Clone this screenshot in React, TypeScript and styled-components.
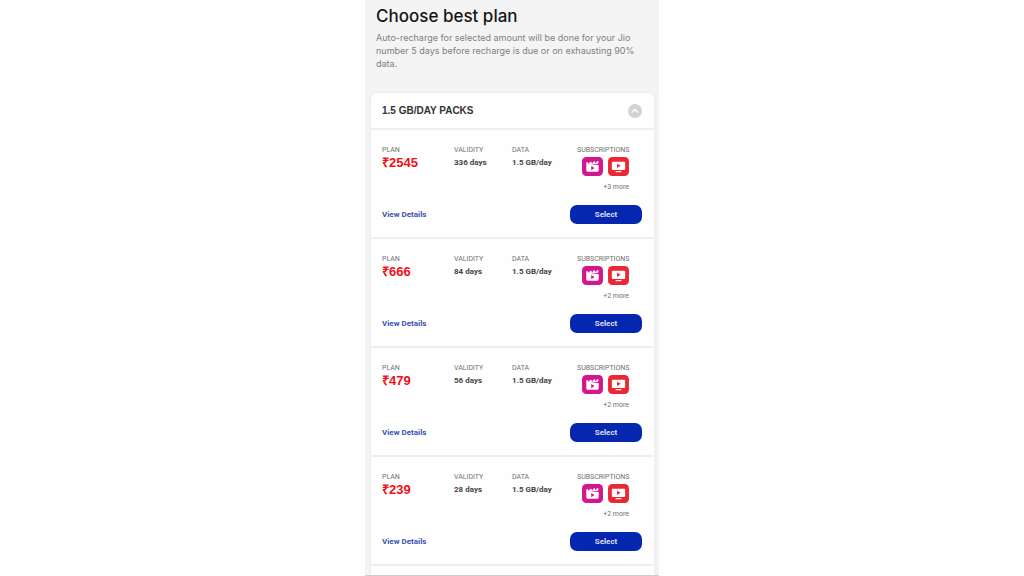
import React from "react";
import styled, { createGlobalStyle } from "styled-components";

const GlobalStyle = createGlobalStyle`
  * { box-sizing: border-box; }
  body {
    margin: 0;
    background: #fefefe;
    font-family: Roboto, "Liberation Sans", sans-serif;
  }
`;

const Screen = styled.main`
  display: flex;
  flex-direction: column;
  width: 100%;
  max-width: 294px;
  height: 100vh;
  margin: 0 auto;
  padding: 6px 5px 0 6px;
  overflow: hidden;
  background: #f4f4f4;
  border-bottom: 1px solid #cfcfcf;
`;

const Intro = styled.header`
  padding: 0 5px 23px;
  font-family: Inter, "Liberation Sans", sans-serif;
`;

const Title = styled.h1`
  margin: 0 0 5px;
  font-size: 17px;
  line-height: 20px;
  font-weight: 500;
  color: #161616;
`;

const Description = styled.p`
  margin: 0;
  font-size: 9px;
  line-height: 13px;
  font-weight: 400;
  color: #808080;
`;

const Card = styled.section`
  flex: 1;
  background: #fefefe;
  border-radius: 6px 6px 0 0;
  box-shadow: 0 0 4px rgba(0, 0, 0, 0.05);
`;

const CardHeader = styled.div`
  display: flex;
  align-items: center;
  justify-content: space-between;
  height: 37px;
  padding: 0 12px 0 11px;
  border-bottom: 2px solid #efefef;
`;

const CardTitle = styled.h2`
  margin: 0;
  font-family: "Liberation Sans", Arial, sans-serif;
  font-size: 10px;
  line-height: 13px;
  font-weight: 700;
  color: #333;
`;

const CollapseButton = styled.button`
  display: flex;
  padding: 0;
  border: 0;
  border-radius: 50%;
  background: #d3d3d3;
`;

const PlanRow = styled.article`
  height: 109px;
  padding: 15px 12px 0 11px;
  border-bottom: 2px solid #efefef;
`;

const Facts = styled.dl`
  display: grid;
  grid-template-columns: 72fr 58fr 65fr 65fr;
  height: 60px;
  margin: 0;
`;

const Fact = styled.div`
  min-width: 0;
`;

const Label = styled.dt`
  font-size: 7px;
  line-height: 10px;
  font-weight: 400;
  white-space: nowrap;
  color: #707070;
`;

const Value = styled.dd<{ $price?: boolean }>`
  margin: 0;
  font-family: ${(p) => (p.$price ? '"Liberation Sans", Arial, sans-serif' : "inherit")};
  font-size: ${(p) => (p.$price ? "13px" : "8px")};
  line-height: 16px;
  font-weight: 700;
  white-space: nowrap;
  color: ${(p) => (p.$price ? "#ec1018" : "#444")};
`;

const Subscriptions = styled.dd`
  width: 52px;
  margin: 2px 0 0;
`;

const Apps = styled.div`
  display: flex;
  justify-content: flex-end;
  gap: 5px;
`;

const More = styled.div`
  margin-top: 7px;
  font-size: 7px;
  line-height: 8px;
  text-align: right;
  color: #707070;
`;

const Actions = styled.div`
  display: flex;
  align-items: center;
  justify-content: space-between;
`;

const DetailsLink = styled.a`
  font-size: 8px;
  line-height: 10px;
  font-weight: 700;
  text-decoration: none;
  color: #3a52b4;
`;

const SelectButton = styled.button`
  width: 72px;
  height: 19px;
  padding: 0;
  border: 0;
  border-radius: 7px;
  background: #0527b0;
  font-family: inherit;
  font-size: 8px;
  font-weight: 700;
  color: #d9dff5;
`;

const CinemaIcon = () => (
  <svg width="21" height="19" viewBox="0 0 22 20" role="img" aria-label="Cinema">
    <rect width="22" height="20" rx="4.5" fill="#d31690" />
    <path d="M4.5 8.4h13v5.8a1.2 1.2 0 0 1-1.2 1.2H5.7a1.2 1.2 0 0 1-1.2-1.2z" fill="#fff" />
    <path d="M4.5 9V5.6l1.5-.2 1.3 2L8.2 5.2l1.5-.2 1 2.2L12 4.8l1.4-.2.8 2.3 1.4-2.5 1.5-.2.2 2-1 1.2z" fill="#fff" />
    <path d="M9.6 9.5v4.4l3.6-2.2z" fill="#d31690" />
  </svg>
);

const TvIcon = () => (
  <svg width="21" height="19" viewBox="0 0 22 20" role="img" aria-label="TV">
    <rect width="22" height="20" rx="4.5" fill="#eb2735" />
    <rect x="4" y="5" width="14" height="8.6" rx="1" fill="#fff" />
    <path d="M8 14.8h6v1.2H8z" fill="#fff" />
    <path d="M9.5 7v4.6l3.8-2.3z" fill="#eb2735" />
  </svg>
);

const plans = [
  { price: 2545, days: 336, more: 3 },
  { price: 666, days: 84, more: 2 },
  { price: 479, days: 56, more: 2 },
  { price: 239, days: 28, more: 2 },
];

export default function App() {
  return (
    <>
      <GlobalStyle />
      <Screen>
        <Intro>
          <Title>Choose best plan</Title>
          <Description>
            Auto-recharge for selected amount will be done for your Jio number 5 days before
            recharge is due or on exhausting 90% data.
          </Description>
        </Intro>
        <Card>
          <CardHeader>
            <CardTitle>1.5 GB/DAY PACKS</CardTitle>
            <CollapseButton aria-label="Collapse packs">
              <svg width="14" height="14" viewBox="0 0 14 14" aria-hidden="true">
                <path d="M4 8.2 7 5.4l3 2.8" fill="none" stroke="#fff" strokeWidth="1.2" strokeLinecap="round" strokeLinejoin="round" />
              </svg>
            </CollapseButton>
          </CardHeader>
          {plans.map((plan) => (
            <PlanRow key={plan.price}>
              <Facts>
                <Fact>
                  <Label>PLAN</Label>
                  <Value $price>₹{plan.price}</Value>
                </Fact>
                <Fact>
                  <Label>VALIDITY</Label>
                  <Value>{plan.days} days</Value>
                </Fact>
                <Fact>
                  <Label>DATA</Label>
                  <Value>1.5 GB/day</Value>
                </Fact>
                <Fact>
                  <Label>SUBSCRIPTIONS</Label>
                  <Subscriptions>
                    <Apps>
                      <CinemaIcon />
                      <TvIcon />
                    </Apps>
                    <More>+{plan.more} more</More>
                  </Subscriptions>
                </Fact>
              </Facts>
              <Actions>
                <DetailsLink href="#details">View Details</DetailsLink>
                <SelectButton>Select</SelectButton>
              </Actions>
            </PlanRow>
          ))}
        </Card>
      </Screen>
    </>
  );
}
